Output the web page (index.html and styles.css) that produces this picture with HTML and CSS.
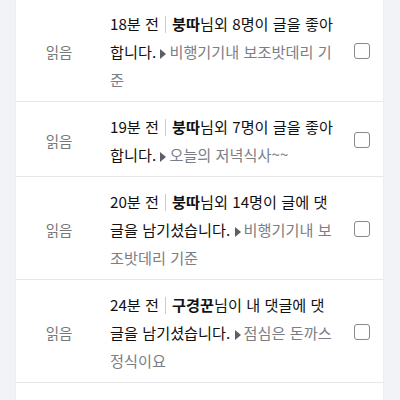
FILE: index.html
```html
<!DOCTYPE html>
<html lang="ko">
<head>
  <meta charset="UTF-8">
  <meta name="viewport" content="width=device-width, initial-scale=1.0">
  <title>알림</title>
  <link rel="stylesheet" href="styles.css">
</head>
<body>
  <div class="panel">
    <ul class="noti-list">
      <li class="noti">
        <span class="state">읽음</span>
        <p class="msg">18분 전<span class="bar"></span><b>붕따</b>님외 8명이 글을 좋아합니다. <span class="arrow"></span><span class="title">비행기기내 보조밧데리 기준</span></p>
        <input class="check" type="checkbox">
      </li>
      <li class="noti">
        <span class="state">읽음</span>
        <p class="msg">19분 전<span class="bar"></span><b>붕따</b>님외 7명이 글을 좋아합니다. <span class="arrow"></span><span class="title">오늘의 저녁식사~~</span></p>
        <input class="check" type="checkbox">
      </li>
      <li class="noti">
        <span class="state">읽음</span>
        <p class="msg">20분 전<span class="bar"></span><b>붕따</b>님외 14명이 글에 댓글을 남기셨습니다. <span class="arrow"></span><span class="title">비행기기내 보조밧데리 기준</span></p>
        <input class="check" type="checkbox">
      </li>
      <li class="noti">
        <span class="state">읽음</span>
        <p class="msg">24분 전<span class="bar"></span><b>구경꾼</b>님이 내 댓글에 댓글을 남기셨습니다. <span class="arrow"></span><span class="title">점심은 돈까스 정식이요</span></p>
        <input class="check" type="checkbox">
      </li>
      <li class="noti">
        <span class="state">읽음</span>
        <p class="msg">33분 전<span class="bar"></span><b>라면곰돌</b>님이 내 댓글에 댓글을 남기셨습니다. <span class="arrow"></span><span class="title">점심은 돈까스 정식이요</span></p>
        <input class="check" type="checkbox">
      </li>
    </ul>
  </div>
</body>
</html>
```

FILE: styles.css
```css
html, body{
  margin: 0;
  padding: 0;
}
body{
  background-color: #f2f3f6;
  font-family: "Noto Sans CJK KR", "Noto Sans", sans-serif;
  color: #111;
}
.panel{
  margin: -1px 17px 0 16px;
  background-color: #fff;
  box-shadow: 0 0 1px rgba(0, 0, 0, .12);
}
.noti-list{
  list-style: none;
  margin: 0;
  padding: 0;
}
.noti{
  display: grid;
  grid-template-columns: 86px 228px 1fr;
  column-gap: 8px;
  align-items: center;
  padding: 10px 0 8px;
  border-bottom: 1px solid #e6e7ea;
}
.state{
  justify-self: center;
  font-size: 14.5px;
  color: #777;
}
.msg{
  margin: 0;
  font-size: 15.2px;
  line-height: 28px;
  word-break: break-all;
}
.msg b{
  font-weight: bold;
}
.bar{
  display: inline-block;
  width: 0;
  height: 17px;
  margin: 0 6px;
  border-left: 1px solid #ccc;
  vertical-align: -3px;
}
.arrow{
  display: inline-block;
  width: 0;
  height: 0;
  margin-right: 3px;
  border-left: 6px solid #5c5f66;
  border-top: 5px solid transparent;
  border-bottom: 5px solid transparent;
  vertical-align: -1px;
}
.title{
  color: #7a7e86;
}
.check{
  justify-self: center;
  appearance: none;
  -webkit-appearance: none;
  width: 16px;
  height: 16px;
  margin: 0 0 0 -5px;
  border: 1.5px solid #8a8a8a;
  border-radius: 3px;
  background: #fff;
}
```
